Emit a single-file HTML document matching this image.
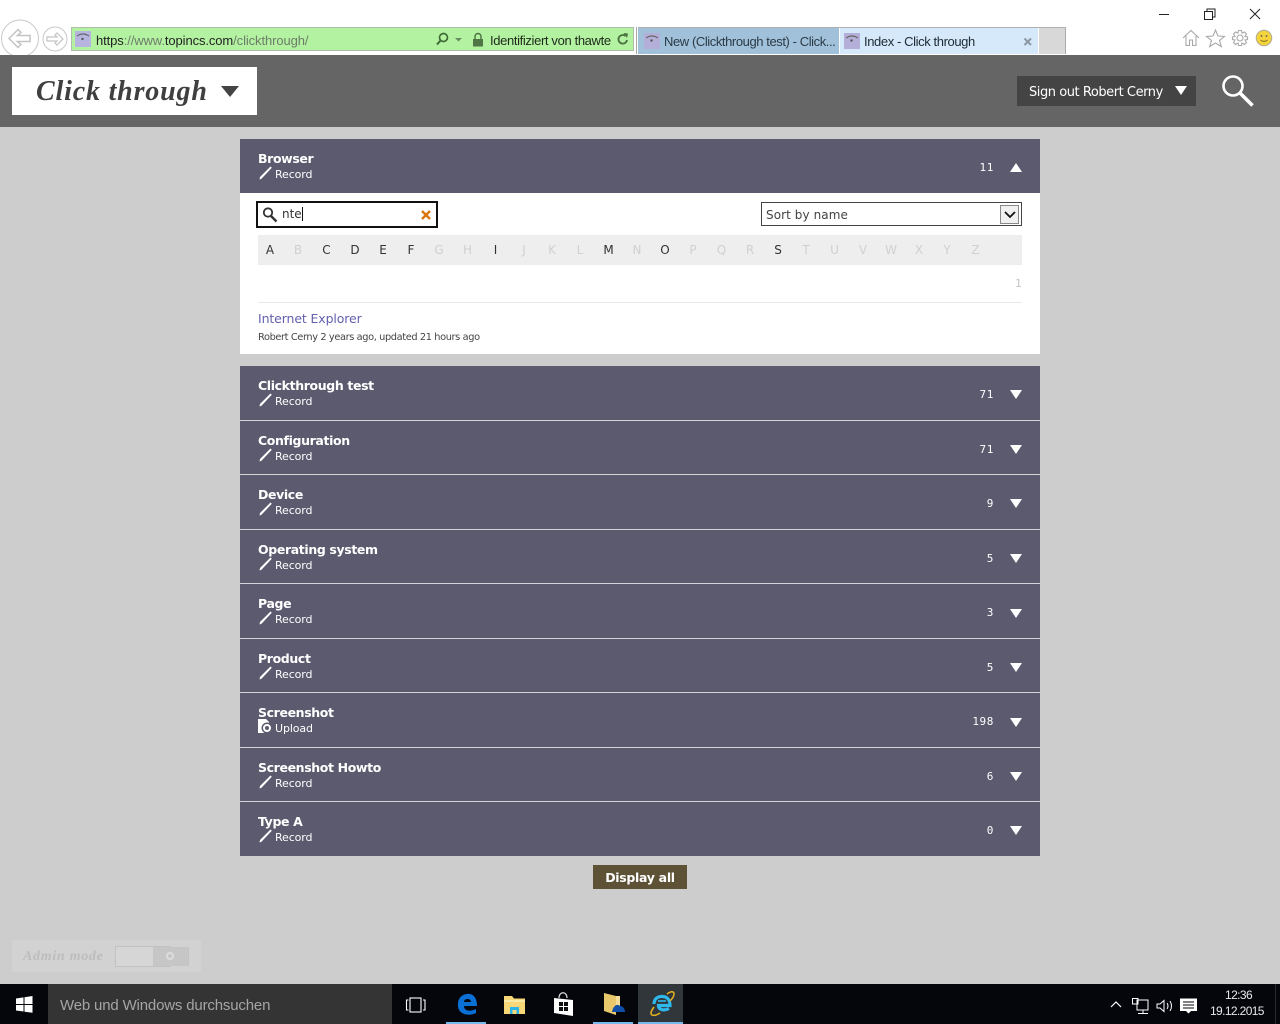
<!DOCTYPE html>
<html><head><meta charset="utf-8"><style>
html,body{margin:0;padding:0}
body{width:1280px;height:1024px;position:relative;overflow:hidden;background:#cdcdcd;font-family:"DejaVu Sans","Liberation Sans",sans-serif}
.a{position:absolute;white-space:nowrap}
.s{font-family:"Liberation Sans",sans-serif}
.bar{position:absolute;left:240px;width:800px;background:#5c5a6e;color:#fff}
.sep{position:absolute;left:240px;width:800px;height:1px;background:#d4d4d8}
.t{position:absolute;left:258px;font-size:12.5px;font-weight:bold;color:#fff;white-space:nowrap;line-height:15px;letter-spacing:-.37px}
.r{position:absolute;left:275px;font-size:11px;color:#fff;white-space:nowrap;line-height:14px;margin-top:1px;letter-spacing:-.1px}
.c{position:absolute;right:286px;font-size:11px;letter-spacing:.6px;color:#fff;font-family:"DejaVu Sans Mono","Liberation Mono",monospace;line-height:14px}
.l{position:absolute;top:243px;font-size:12px;line-height:14px;width:20px;text-align:center;color:#333}
.l.o{color:#d0d0d0}
svg{position:absolute;overflow:visible}
</style></head><body>
<!-- chrome -->
<div class="a" style="left:0;top:0;width:1280px;height:55px;background:#fff"></div>
<svg style="left:0;top:0" width="130" height="55">
<circle cx="20" cy="38.5" r="18.500" fill="#fff" stroke="#c8c8c8"/>
<path d="M9 38.500 L18 29.500 L21 32.500 L17.500 35.500 H30 V41.500 H17.500 L21 44.500 L18 47.500 Z" fill="#fff" stroke="#c4c4c4" stroke-width="1.500"/>
<circle cx="55" cy="39" r="12" fill="#fff" stroke="#c8c8c8"/>
<path d="M63 39 L57 33 L55 35 L57 37 H47 V41 H57 L55 43 L57 45 Z" fill="#fff" stroke="#c4c4c4" stroke-width="1.200"/>
</svg>
<div class="a" style="left:71px;top:27px;width:561px;height:22px;background:#b3f2a1;border:1.500px solid #aebcaa"></div>
<div class="a" style="left:75px;top:31px;width:16px;height:16px;background:#b8b4e0"></div>
<svg style="left:75px;top:31px" width="16" height="16"><path d="M2 5 Q8 1 14 5" fill="none" stroke="#666" stroke-width="1.200"/><circle cx="7.500" cy="8" r="1.200" fill="#555"/></svg>
<div class="a s" style="left:96px;top:33px;font-size:13px;line-height:16px;color:#6d7c69;letter-spacing:-.1px"><span style="color:#222">https</span>://www.<span style="color:#222">topincs.com</span>/clickthrough/</div>
<svg style="left:435px;top:31px" width="30" height="16"><circle cx="8.500" cy="6.500" r="4" fill="none" stroke="#3f6a36" stroke-width="1.700"/><path d="M5.500 9.500 L2 13.500" stroke="#3f6a36" stroke-width="2"/><path d="M20 7 h7 l-3.500 3.500z" fill="#6a8a62"/></svg>
<svg style="left:472px;top:32px" width="13" height="15"><path d="M3 7 V4.500 a3 3 0 0 1 6 0 V7" fill="none" stroke="#4a6f40" stroke-width="1.400"/><rect x="1" y="7" width="10" height="7.500" fill="#4f7546"/></svg>
<div class="a s" style="left:490px;top:33px;font-size:13px;line-height:16px;color:#1f2a1c;letter-spacing:-.36px">Identifiziert von thawte</div>
<svg style="left:616px;top:32px" width="14" height="15"><path d="M11 8 a4.300 4.300 0 1 1 -1.500 -4" fill="none" stroke="#4a6f40" stroke-width="1.800"/><path d="M7.500 1 L12 1.500 L11 6 Z" fill="#4a6f40"/></svg>
<div class="a" style="left:636px;top:27px;width:1px;height:27px;background:#aaa"></div>
<div class="a" style="left:638px;top:27px;width:428px;height:1px;background:#b0b0b0"></div>
<div class="a" style="left:638px;top:28px;width:201px;height:26px;background:#a1c1da"></div>
<div class="a" style="left:840px;top:28px;width:198px;height:26px;background:#d6e9fa"></div>
<div class="a" style="left:1039px;top:28px;width:26px;height:26px;background:#d8d8d8;border-right:1px solid #aaa"></div>
<div class="a" style="left:644px;top:33px;width:16px;height:16px;background:#b4afd8"></div>
<svg style="left:644px;top:33px" width="16" height="16"><path d="M2 5 Q8 1 14 5" fill="none" stroke="#666" stroke-width="1.200"/><circle cx="7.500" cy="7.500" r="1.200" fill="#555"/></svg>
<div class="a s" style="left:664px;top:34px;font-size:13px;line-height:16px;color:#2b3a45;letter-spacing:-.42px">New (Clickthrough test) - Click...</div>
<div class="a" style="left:844px;top:33px;width:16px;height:16px;background:#b4afd8"></div>
<svg style="left:844px;top:33px" width="16" height="16"><path d="M2 5 Q8 1 14 5" fill="none" stroke="#666" stroke-width="1.200"/><circle cx="7.500" cy="7.500" r="1.200" fill="#555"/></svg>
<div class="a s" style="left:864px;top:34px;font-size:13px;line-height:16px;color:#1e2a33;letter-spacing:-.4px">Index - Click through</div>
<svg style="left:1023px;top:37px" width="10" height="10"><path d="M1.500 1.500 L8 8 M8 1.500 L1.500 8" stroke="#8b98a4" stroke-width="2"/></svg>
<svg style="left:1155px;top:5px" width="112" height="18" fill="none" stroke="#222"><path d="M4 9.500 H14"/><path d="M49.500 6.500 H57.500 V14.500 H49.500 Z M52 6.500 V4 H60 V12 H57.500"/><path d="M95 4 L105 14 M105 4 L95 14"/></svg>
<svg style="left:1182px;top:28px" width="92" height="20" fill="none" stroke="#a8a8a8" stroke-width="1.100">
<path d="M1 10 L9 2.500 L17 10 M4 8 V17.500 H7.500 V12 H10.500 V17.500 H14 V8"/>
<path d="M33.500 2 L36 8 L42.500 8.500 L37.500 12.500 L39.300 18.500 L33.500 15 L27.700 18.500 L29.500 12.500 L24.500 8.500 L31 8 Z"/>
<circle cx="58" cy="10" r="3"/><path d="M56.500 2.500 H59.500 L60 5 L62.500 4 L64.500 6 L63 8.500 L65.500 9 V11.500 L63 12 L64.500 14.500 L62.500 16.500 L60 15 L59.500 17.500 H56.500 L56 15 L53.500 16.500 L51.500 14.500 L53 12 L50.500 11.500 V9 L53 8.500 L51.500 6 L53.500 4 L56 5 Z"/>
<circle cx="82" cy="10" r="7.700" fill="#f5d33c" stroke="#b5b08c"/><circle cx="79.500" cy="8" r=".9" fill="#555" stroke="none"/><circle cx="84.500" cy="8" r=".9" fill="#555" stroke="none"/><path d="M78.500 12 Q82 15 85.500 12" stroke="#8a7a20"/>
</svg>
<!-- header -->
<div class="a" style="left:0;top:55px;width:1280px;height:72px;background:#656565"></div>
<div class="a" style="left:12px;top:67px;width:245px;height:48px;background:#fff"></div>
<div class="a" style="left:36px;top:75px;font-family:'Liberation Serif',serif;font-style:italic;font-weight:bold;font-size:28px;line-height:33px;color:#3f3f3f;letter-spacing:.82px">Click through</div>
<svg style="left:221px;top:86px" width="18" height="11"><path d="M0 0 H18 L9 11 Z" fill="#444"/></svg>
<div class="a" style="left:1017px;top:76px;width:179px;height:30px;background:#444"></div>
<div class="a" style="left:1029px;top:85px;font-size:13px;line-height:16px;color:#fff;letter-spacing:-.45px">Sign out Robert Cerny</div>
<svg style="left:1175px;top:86px" width="12" height="9"><path d="M0 0 H12 L6 9 Z" fill="#fff"/></svg>
<svg style="left:1220px;top:74px" width="36" height="34" fill="none" stroke="#fff"><circle cx="13" cy="12" r="9.500" stroke-width="2.600"/><path d="M20 19 L32.500 31.500" stroke-width="3.600"/></svg>
<!-- panel -->
<div class="bar" style="top:139px;height:54px"></div>
<div class="a" style="left:240px;top:193px;width:800px;height:161px;background:#fff"></div>
<div class="a" style="left:256px;top:201px;width:178px;height:23px;border:2px solid #111;background:#fff"></div>
<svg style="left:262px;top:207px" width="16" height="16" fill="none" stroke="#333"><circle cx="6" cy="5.500" r="4.200" stroke-width="1.800"/><path d="M9 9 L14.500 14.500" stroke-width="2.400"/></svg>
<div class="a" style="left:282px;top:207px;font-size:12px;line-height:15px;color:#333">nte<span style="border-left:1px solid #111;margin-left:0"></span></div>
<svg style="left:421px;top:210px" width="10" height="10"><path d="M1 1 L9 9 M9 1 L1 9" stroke="#d9730d" stroke-width="2.400"/></svg>
<div class="a" style="left:761px;top:202px;width:259px;height:22px;border:1px solid #444;background:#fff"></div>
<div class="a" style="left:766px;top:208px;font-size:12px;line-height:15px;color:#444;letter-spacing:.08px">Sort by name</div>
<div class="a" style="left:1000px;top:205px;width:17px;height:17px;border:1px solid #888;background:#f0f0f0"></div>
<svg style="left:1004px;top:211px" width="12" height="8"><path d="M1 1 L6 6 L11 1" fill="none" stroke="#111" stroke-width="1.800"/></svg>
<div class="a" style="left:258px;top:235px;width:764px;height:30px;background:#eee"></div>
<div class="l" style="left:260px">A</div><div class="l o" style="left:288px">B</div><div class="l" style="left:316.500px">C</div><div class="l" style="left:345px">D</div><div class="l" style="left:373px">E</div><div class="l" style="left:401px">F</div><div class="l o" style="left:429px">G</div><div class="l o" style="left:457.500px">H</div><div class="l" style="left:485.500px">I</div><div class="l o" style="left:514px">J</div><div class="l o" style="left:542px">K</div><div class="l o" style="left:570px">L</div><div class="l" style="left:598.500px">M</div><div class="l o" style="left:627px">N</div><div class="l" style="left:655px">O</div><div class="l o" style="left:683px">P</div><div class="l o" style="left:711.500px">Q</div><div class="l o" style="left:740px">R</div><div class="l" style="left:768px">S</div><div class="l o" style="left:796px">T</div><div class="l o" style="left:824.500px">U</div><div class="l o" style="left:853px">V</div><div class="l o" style="left:881px">W</div><div class="l o" style="left:909px">X</div><div class="l o" style="left:937px">Y</div><div class="l o" style="left:965.500px">Z</div>
<div class="a" style="left:1015px;top:277px;font-size:11px;line-height:13px;color:#c4c4c4;font-family:'DejaVu Sans Mono',monospace">1</div>
<div class="a" style="left:258px;top:302px;width:764px;height:1px;background:#e8e8e8"></div>
<div class="a" style="left:258px;top:311px;font-size:12.500px;line-height:15px;color:#6560ae;letter-spacing:-.12px">Internet Explorer</div>
<div class="a" style="left:258px;top:331px;font-size:9.800px;line-height:13px;color:#444;letter-spacing:-.39px">Robert Cerny 2 years ago, updated 21 hours ago</div>
<!-- bars -->
<div class="bar" style="top:366px;height:490px"></div>
<div class="sep" style="top:420px"></div><div class="sep" style="top:474px"></div><div class="sep" style="top:529px"></div><div class="sep" style="top:583px"></div><div class="sep" style="top:638px"></div><div class="sep" style="top:692px"></div><div class="sep" style="top:747px"></div><div class="sep" style="top:801px"></div>
<div class="t" style="top:151px">Browser</div><div class="r" style="top:167px">Record</div><div class="c" style="top:161px">11</div>
<svg style="left:259px;top:166px" width="13" height="14"><path d="M.5 13.500 L1 11 L11.500 .5 L12.800 1.800 L2.500 12.700 Z" fill="#fff"/></svg>
<svg style="left:1010px;top:163px" width="12" height="9"><path d="M0 9 H12 L6 0 Z" fill="#fff"/></svg>
<div class="t" style="top:378px">Clickthrough test</div><div class="r" style="top:394px">Record</div><div class="c" style="top:388px">71</div>
<svg style="left:259px;top:393px" width="13" height="14"><path d="M.5 13.500 L1 11 L11.500 .5 L12.800 1.800 L2.500 12.700 Z" fill="#fff"/></svg>
<svg style="left:1010px;top:390px" width="12" height="9"><path d="M0 0 H12 L6 9 Z" fill="#fff"/></svg>
<div class="t" style="top:433px">Configuration</div><div class="r" style="top:449px">Record</div><div class="c" style="top:443px">71</div>
<svg style="left:259px;top:448px" width="13" height="14"><path d="M.5 13.500 L1 11 L11.500 .5 L12.800 1.800 L2.500 12.700 Z" fill="#fff"/></svg>
<svg style="left:1010px;top:445px" width="12" height="9"><path d="M0 0 H12 L6 9 Z" fill="#fff"/></svg>
<div class="t" style="top:487px">Device</div><div class="r" style="top:503px">Record</div><div class="c" style="top:497px">9</div>
<svg style="left:259px;top:502px" width="13" height="14"><path d="M.5 13.500 L1 11 L11.500 .5 L12.800 1.800 L2.500 12.700 Z" fill="#fff"/></svg>
<svg style="left:1010px;top:499px" width="12" height="9"><path d="M0 0 H12 L6 9 Z" fill="#fff"/></svg>
<div class="t" style="top:542px">Operating system</div><div class="r" style="top:558px">Record</div><div class="c" style="top:552px">5</div>
<svg style="left:259px;top:557px" width="13" height="14"><path d="M.5 13.500 L1 11 L11.500 .5 L12.800 1.800 L2.500 12.700 Z" fill="#fff"/></svg>
<svg style="left:1010px;top:554px" width="12" height="9"><path d="M0 0 H12 L6 9 Z" fill="#fff"/></svg>
<div class="t" style="top:596px">Page</div><div class="r" style="top:612px">Record</div><div class="c" style="top:606px">3</div>
<svg style="left:259px;top:611px" width="13" height="14"><path d="M.5 13.500 L1 11 L11.500 .5 L12.800 1.800 L2.500 12.700 Z" fill="#fff"/></svg>
<svg style="left:1010px;top:609px" width="12" height="9"><path d="M0 0 H12 L6 9 Z" fill="#fff"/></svg>
<div class="t" style="top:651px">Product</div><div class="r" style="top:667px">Record</div><div class="c" style="top:661px">5</div>
<svg style="left:259px;top:666px" width="13" height="14"><path d="M.5 13.500 L1 11 L11.500 .5 L12.800 1.800 L2.500 12.700 Z" fill="#fff"/></svg>
<svg style="left:1010px;top:663px" width="12" height="9"><path d="M0 0 H12 L6 9 Z" fill="#fff"/></svg>
<div class="t" style="top:705px">Screenshot</div><div class="r" style="top:721px">Upload</div><div class="c" style="top:715px">198</div>
<svg style="left:258px;top:719px" width="15" height="15"><path d="M0 0 H8 L11 3 V14 H0 Z" fill="#fff"/><circle cx="9" cy="9" r="5.500" fill="#5c5a6e"/><circle cx="9" cy="9" r="3" fill="none" stroke="#fff" stroke-width="2"/></svg>
<svg style="left:1010px;top:718px" width="12" height="9"><path d="M0 0 H12 L6 9 Z" fill="#fff"/></svg>
<div class="t" style="top:760px">Screenshot Howto</div><div class="r" style="top:776px">Record</div><div class="c" style="top:770px">6</div>
<svg style="left:259px;top:775px" width="13" height="14"><path d="M.5 13.500 L1 11 L11.500 .5 L12.800 1.800 L2.500 12.700 Z" fill="#fff"/></svg>
<svg style="left:1010px;top:772px" width="12" height="9"><path d="M0 0 H12 L6 9 Z" fill="#fff"/></svg>
<div class="t" style="top:814px">Type A</div><div class="r" style="top:830px">Record</div><div class="c" style="top:824px">0</div>
<svg style="left:259px;top:829px" width="13" height="14"><path d="M.5 13.500 L1 11 L11.500 .5 L12.800 1.800 L2.500 12.700 Z" fill="#fff"/></svg>
<svg style="left:1010px;top:826px" width="12" height="9"><path d="M0 0 H12 L6 9 Z" fill="#fff"/></svg>
<!-- display all -->
<div class="a" style="left:593px;top:865px;width:94px;height:24px;background:#5e5236;color:#fff;font-size:12.500px;font-weight:bold;line-height:25px;text-align:center;letter-spacing:-.3px">Display all</div>
<!-- admin -->
<div class="a" style="left:12px;top:940px;width:189px;height:32px;background:#d2d2d2"></div>
<div class="a" style="left:23px;top:949px;font-family:'Liberation Serif',serif;font-style:italic;font-weight:bold;font-size:14px;line-height:16px;color:#bdbdbd;letter-spacing:.7px">Admin mode</div>
<div class="a" style="left:115px;top:946px;width:54px;height:19px;border:1px solid #c2c2c2;background:#d6d6d6"></div>
<div class="a" style="left:153px;top:947px;width:35px;height:19px;background:#c6c6c6;border-right:1px solid #c2c2c2"></div>
<svg style="left:165px;top:951px" width="10" height="10"><circle cx="5" cy="5" r="3" fill="none" stroke="#dcdcdc" stroke-width="2"/></svg>
<!-- taskbar -->
<div class="a" style="left:0;top:984px;width:1280px;height:40px;background:#04060c"></div>
<svg style="left:16px;top:996px" width="17" height="17"><path d="M0 2.500 L7.500 1.400 V8 H0 Z M8.500 1.200 L16.500 0 V8 H8.500 Z M0 9 H7.500 V15.500 L0 14.500 Z M8.500 9 H16.500 V16.800 L8.500 15.700 Z" fill="#fff"/></svg>
<div class="a" style="left:48px;top:984px;width:344px;height:40px;background:#343434"></div>
<div class="a s" style="left:60px;top:997px;font-size:15px;line-height:18px;color:#a5a5a5;letter-spacing:-.17px">Web und Windows durchsuchen</div>
<svg style="left:406px;top:997px" width="20" height="16" fill="none" stroke="#fff" stroke-width="1.100"><rect x="4" y="1" width="11" height="14"/><path d="M2.500 3 H.5 V13 H2.500 M17 3 H19 V13 H17"/></svg>
<svg style="left:456px;top:992px" width="22" height="24"><path d="M2 12 C2 4 9 1 14 2 C19 3 21 8 21 14 H8 C8 19 14 20 20 17 V21 C12 25 1 22 2 12 Z M8 10 H15 C15 6 8 6 8 10 Z" fill="#0a70d6" fill-rule="evenodd"/></svg>
<div class="a" style="left:446px;top:1022px;width:40px;height:2px;background:#76b9ed"></div>
<svg style="left:503px;top:995px" width="23" height="20"><path d="M1 1 H9 L11 3.500 H22 V19 H1 Z" fill="#f7d778"/><path d="M1 5 H22 V7 H1 Z" fill="#fbe9a6"/><path d="M7 12 H16 V19 H13.500 V15 H9.500 V19 H7 Z" fill="#2db4ea"/></svg>
<svg style="left:553px;top:991px" width="21" height="26"><path d="M6 7 C6 0 14 0 14 7" fill="none" stroke="#ddd" stroke-width="1.200"/><path d="M1 7 L20 9 V25 L1 22 Z" fill="#fff"/><path d="M6 11 H10 V15 H6 Z M11 11 H15 V15 H11 Z M6 16 H10 V20 H6 Z M11 16 H15 V20 H11 Z" fill="#111"/></svg>
<svg style="left:603px;top:991px" width="23" height="26"><path d="M1 2 L13 5 V24 L1 20 Z" fill="#e9c86c"/><path d="M13 5 H17 V16 H13 Z" fill="#f4dd98"/><path d="M9 21 C10 15 14 12 17 15 C20 15 22 18 22 21 Z" fill="#0f4fa8"/></svg>
<div class="a" style="left:593px;top:1022px;width:40px;height:2px;background:#76b9ed"></div>
<div class="a" style="left:638px;top:984px;width:45px;height:40px;background:#31363b"></div>
<svg style="left:649px;top:990px" width="26" height="28" fill="none"><path d="M5 14 C5 8 10 6 14 6.500 C19 7 21 11 21 15.500 H9.500 C9.500 20 15 21 20 18.500" stroke="#2fb8ec" stroke-width="3.200"/><path d="M9 11 H17" stroke="#2fb8ec" stroke-width="1.600"/><path d="M18 4 C22 1 25 1 25 4 C25 6 23 9 21 11 M5 17 C2 21 1 24 3 25 C5 26 8 25 11 23" stroke="#e8b41f" stroke-width="1.500"/></svg>
<div class="a" style="left:638px;top:1022px;width:45px;height:2px;background:#76b9ed"></div>
<svg style="left:1110px;top:998px" width="88" height="18" fill="none" stroke="#fff"><path d="M1 9 L6 4 L11 9" stroke-width="1.200"/><path d="M27 2 H38 V12 H27 Z M33 12 V15 M28 15.500 H38 M22.500 .5 H28 V6 H22.500 Z" stroke-width="1" fill="#04060c"/><path d="M47 6 H50 L54 2.500 V13.500 L50 10 H47 Z M57 5 Q59 8 57 11 M60 3 Q63 8 60 13" stroke-width="1"/><path d="M70 .5 H87 V13 H81 L78.500 15.500 L76 13 H70 Z" fill="#fff" stroke="none"/><path d="M73 4 H84 M73 7 H84 M73 10 H84" stroke="#04060c"/></svg>
<div class="a s" style="left:1225px;top:988px;font-size:12px;line-height:14px;color:#e8e8e8;letter-spacing:-.6px">12:36</div>
<div class="a s" style="left:1210px;top:1004px;font-size:12px;line-height:14px;color:#e8e8e8;letter-spacing:-.62px">19.12.2015</div>
<div class="a" style="left:1275px;top:984px;width:1px;height:40px;background:#2a2a2a"></div>
</body></html>
